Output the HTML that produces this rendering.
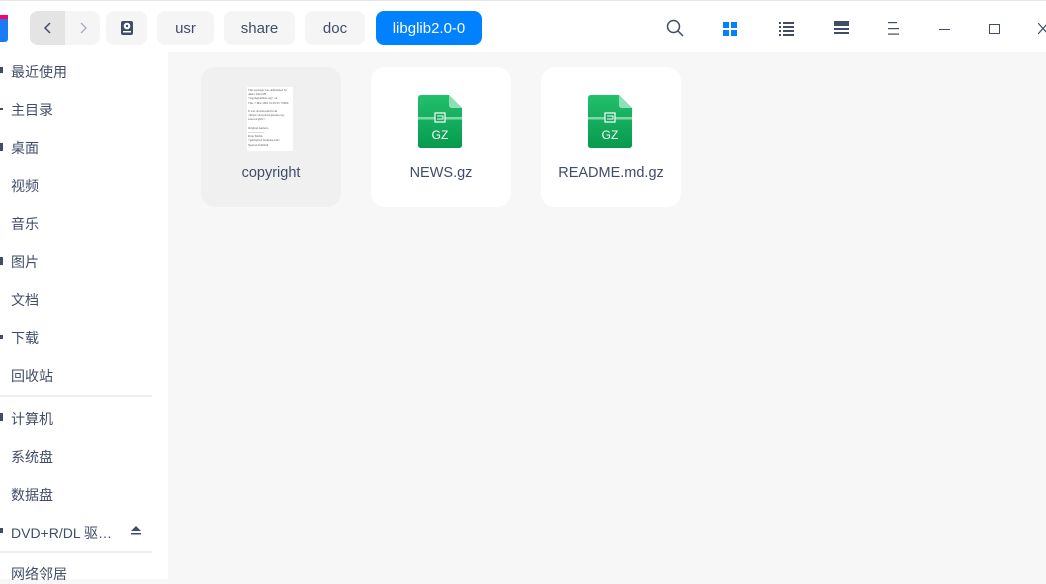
<!DOCTYPE html>
<html><head><meta charset="utf-8"><style>
*{margin:0;padding:0;box-sizing:border-box}
body{width:1046px;height:579px;overflow:hidden;background:#f7f7f7;font-family:"Liberation Sans","Noto Sans CJK SC",sans-serif;position:relative;color:#414d68}
.top{position:absolute;left:0;top:0;width:1046px;height:52px;background:#fff;border-top:1px solid #e6e6e6}
.side{position:absolute;left:0;top:51px;width:168px;height:528px;background:#fff}
.btn{position:absolute;top:10px;height:34px;border-radius:8px;background:#f5f5f5;font-size:15px;color:#414d68;display:flex;align-items:center;justify-content:center}
.si{position:absolute;left:11px;font-size:14px;color:#414d68}
.dot{position:absolute;left:0;width:3px;height:8px;background:#414d68}
.sep{position:absolute;left:0;width:152px;height:2px;background:#eee}
.card{position:absolute;top:67px;width:140px;height:140px;border-radius:14px;background:#fff}
.card .lbl{position:absolute;top:98px;width:100%;text-align:center;font-size:14.5px;color:#414d68}
.gz{position:absolute;left:47px;top:28px;width:44px;height:53px}
</style></head><body>
<div class="top">
 <div style="position:absolute;left:-4px;top:14px;width:12px;height:27px;border-radius:3px;background:#1a7cf5"></div>
 <div style="position:absolute;left:-4px;top:14px;width:12px;height:4px;background:#f06"></div>
 <div class="btn" style="left:30px;width:70px;padding:0"><div style="width:35px;height:34px;background:#e4e4e4;border-radius:8px 0 0 8px;display:flex;align-items:center;justify-content:center">
 <svg width="12" height="12"><path d="M8 1L3 6L8 11" stroke="#414d68" stroke-width="1.5" fill="none"/></svg></div><div style="width:35px;display:flex;justify-content:center"><svg width="12" height="12"><path d="M4 1L9 6L4 11" stroke="#aab" stroke-width="1.3" fill="none"/></svg></div></div>
 <div class="btn" style="left:106px;width:41px"><svg width="14" height="16"><rect x="1" y="1" width="12" height="14" rx="2" fill="#414d68"/><circle cx="7" cy="6" r="3.3" fill="#fff"/><circle cx="7" cy="6" r="1.2" fill="#414d68"/><rect x="3" y="11" width="8" height="1.5" fill="#fff"/></svg></div>
 <div class="btn" style="left:157px;width:57px">usr</div>
 <div class="btn" style="left:224px;width:71px">share</div>
 <div class="btn" style="left:305px;width:60px">doc</div>
 <div class="btn" style="left:376px;width:106px;background:#0081ff;color:#fff">libglib2.0-0</div>
 <svg style="position:absolute;left:666px;top:18px" width="18" height="18"><circle cx="7.5" cy="7.5" r="6" stroke="#414d68" stroke-width="1.5" fill="none"/><path d="M12 12L17 17" stroke="#414d68" stroke-width="1.5"/></svg>
 <svg style="position:absolute;left:723px;top:21px" width="14" height="14" fill="#0081ff"><rect width="6" height="6"/><rect x="8" width="6" height="6"/><rect y="8" width="6" height="6"/><rect x="8" y="8" width="6" height="6"/></svg>
 <svg style="position:absolute;left:779px;top:21px" width="15" height="14" fill="#414d68"><rect width="2" height="2"/><rect x="4" width="11" height="2"/><rect y="4" width="2" height="2"/><rect x="4" y="4" width="11" height="2"/><rect y="8" width="2" height="2"/><rect x="4" y="8" width="11" height="2"/><rect y="12" width="2" height="2"/><rect x="4" y="12" width="11" height="2"/></svg>
 <svg style="position:absolute;left:834px;top:20px" width="15" height="15" fill="#414d68"><rect width="15" height="5"/><rect y="7" width="15" height="2"/><rect y="11" width="15" height="2"/></svg>
 <svg style="position:absolute;left:888px;top:21px" width="12" height="13" fill="#414d68"><rect width="9" height="1.2"/><rect y="6" width="11" height="1.2"/><rect y="11.5" width="11" height="1.2"/></svg>
 <div style="position:absolute;left:939px;top:28px;width:11px;height:1.3px;background:#414d68"></div>
 <div style="position:absolute;left:989px;top:23px;width:11px;height:10px;border:1.3px solid #414d68"></div>
 <svg style="position:absolute;left:1038px;top:22px" width="10" height="12"><path d="M0 0L10 11M10 0L0 11" stroke="#414d68" stroke-width="1.2"/></svg>
</div>
<div class="side">
 <div class="dot" style="top:16px;height:6px"></div><div class="si" style="top:11px">最近使用</div>
 <div class="dot" style="top:57px;height:2px"></div><div class="si" style="top:49px">主目录</div>
 <div class="dot" style="top:92px"></div><div class="si" style="top:87px">桌面</div>
 <div class="si" style="top:125px">视频</div>
 <div class="si" style="top:163px">音乐</div>
 <div class="dot" style="top:206px"></div><div class="si" style="top:201px">图片</div>
 <div class="si" style="top:239px">文档</div>
 <div class="dot" style="top:284px;height:4px"></div><div class="si" style="top:277px">下载</div>
 <div class="si" style="top:315px">回收站</div>
 <div class="sep" style="top:344px"></div>
 <div class="dot" style="top:362px"></div><div class="si" style="top:358px">计算机</div>
 <div class="si" style="top:396px">系统盘</div>
 <div class="si" style="top:434px">数据盘</div>
 <div class="dot" style="top:477px;height:5px"></div><div class="si" style="top:472px">DVD+R/DL 驱…</div>
 <svg style="position:absolute;left:131px;top:475px" width="10" height="9" fill="#414d68"><path d="M5 0L10 5H0Z"/><rect y="7" width="10" height="1.5"/></svg>
 <div class="sep" style="top:500px"></div>
 <div class="si" style="top:513px">网络邻居</div>
</div>
<div class="card" style="left:201px;background:#f0f0f0">
 <div style="position:absolute;left:46px;top:20px;width:46px;height:64px;background:#fff;font-size:3px;line-height:4.2px;color:#555;padding:1px;overflow:hidden;font-family:'Liberation Serif',serif">This package was debianized by<br>Akira TAGOH<br>&lt;tagoh@debian.org&gt; on<br>Thu, 7 Mar 2002 01:05:25 +0900.<br><br>It was downloaded from<br>&lt;https://download.gnome.org/<br>sources/glib/&gt;.<br><br>Original Authors<br>----------------<br>Peter Mattis<br>&lt;petm@xcf.berkeley.edu&gt;<br>Spencer Kimball</div>
 <div class="lbl">copyright</div>
</div>
<div class="card" style="left:371px">
 <svg class="gz" viewBox="0 0 44 53"><defs><linearGradient id="g" x1="0" y1="0" x2="0" y2="1"><stop offset="0" stop-color="#22c06d"/><stop offset="1" stop-color="#079a4e"/></linearGradient></defs><path d="M3 0H31L44 13V50Q44 53 41 53H3Q0 53 0 50V3Q0 0 3 0Z" fill="url(#g)"/><path d="M31 0V10Q31 13 34 13H44Z" fill="#8fe0b4"/><rect y="22" width="44" height="2.5" fill="#7fd9a6"/><rect x="17" y="18" width="10" height="9" fill="#14a85a" stroke="#fff" stroke-width="1.2"/><path d="M19 21H25V24H19" stroke="#fff" stroke-width="1" fill="none"/><text x="22" y="44" text-anchor="middle" font-size="12" fill="#fff" font-family="Liberation Sans">GZ</text></svg>
 <div class="lbl">NEWS.gz</div>
</div>
<div class="card" style="left:541px">
 <svg class="gz" viewBox="0 0 44 53"><path d="M3 0H31L44 13V50Q44 53 41 53H3Q0 53 0 50V3Q0 0 3 0Z" fill="url(#g)"/><path d="M31 0V10Q31 13 34 13H44Z" fill="#8fe0b4"/><rect y="22" width="44" height="2.5" fill="#7fd9a6"/><rect x="17" y="18" width="10" height="9" fill="#14a85a" stroke="#fff" stroke-width="1.2"/><path d="M19 21H25V24H19" stroke="#fff" stroke-width="1" fill="none"/><text x="22" y="44" text-anchor="middle" font-size="12" fill="#fff" font-family="Liberation Sans">GZ</text></svg>
 <div class="lbl">README.md.gz</div>
</div>
</body></html>
